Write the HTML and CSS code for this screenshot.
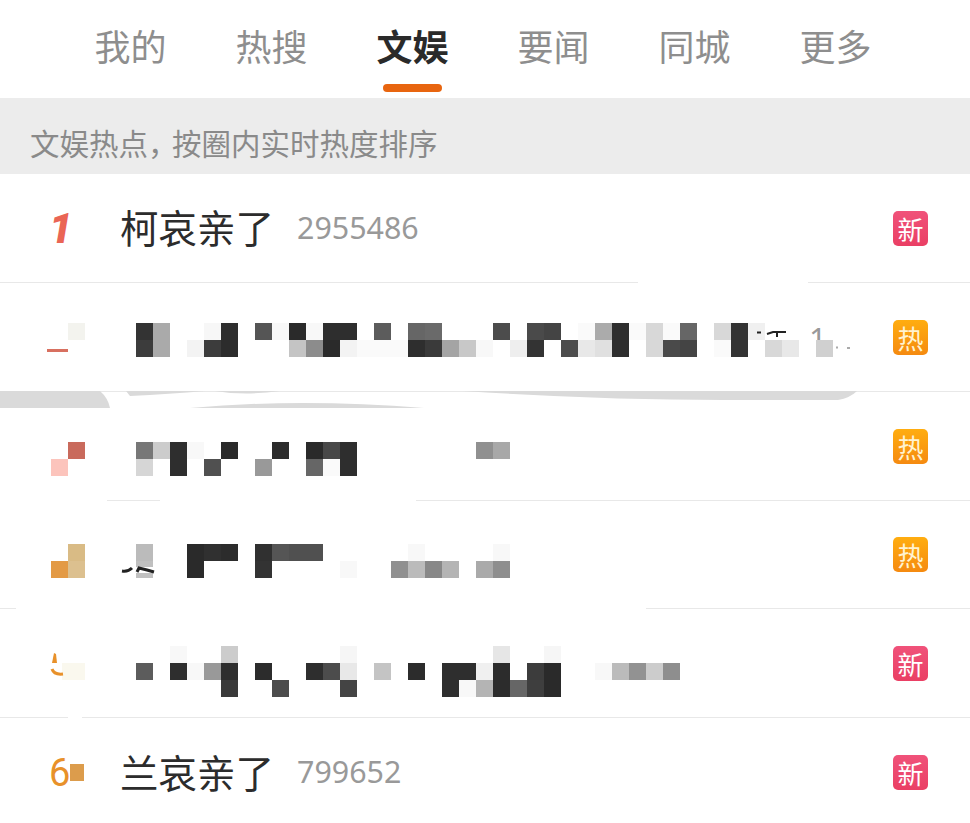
FILE: index.html
```html
<!DOCTYPE html>
<html lang="zh-CN">

<head>
  <meta charset="UTF-8">
  <meta name="viewport" content="width=device-width, initial-scale=1.0">
  <title>文娱热点</title>
  <link rel="stylesheet" href="styles.css">
</head>

<body>
  <div class="page">
    <div class="tabs">
      <div class="tab">我的</div>
      <div class="tab">热搜</div>
      <div class="tab active">文娱</div>
      <div class="tab">要闻</div>
      <div class="tab">同城</div>
      <div class="tab">更多</div>
    </div>

    <div class="notice">文娱热点<span class="comma">，</span>按圈内实时热度排序</div>

    <div class="row">
      <div class="rank rank-first">1</div>
      <div class="title">柯哀亲了</div>
      <div class="count">2955486</div>
      <div class="badge new">新</div>
    </div>

    <!-- row 2, title is pixelated in the screenshot -->
    <div class="row">
      <svg class="hidden" viewBox="0 0 880 108">
        <text class="stray" x="809" y="67">1</text>
        <g class="cells" transform="translate(51 40) scale(17)">
          <rect x="1" y="0" fill="#f3f3ee" />
        </g>
        <rect x="47" y="66" width="21" height="3" fill="#d87060" />
        <g class="cells" transform="translate(136 40) scale(17)">
          <rect x="0" y="0" fill="#333" /><rect x="1" y="0" fill="#aaa" /><rect x="4" y="0" fill="#f7f7f7" />
          <rect x="5" y="0" fill="#2e2e2e" /><rect x="7" y="0" fill="#555" /><rect x="8" y="0" fill="#f8f8f8" />
          <rect x="9" y="0" fill="#2a2a2a" /><rect x="10" y="0" fill="#f8f8f8" /><rect x="11" y="0" fill="#2e2e2e" />
          <rect x="12" y="0" fill="#2e2e2e" /><rect x="14" y="0" fill="#5c5c5c" /><rect x="16" y="0" fill="#666" />
          <rect x="17" y="0" fill="#6a6a6a" /><rect x="21" y="0" fill="#4c4c4c" /><rect x="23" y="0" fill="#4a4a4a" />
          <rect x="24" y="0" fill="#444" /><rect x="26" y="0" fill="#fafafa" /><rect x="27" y="0" fill="#ababab" />
          <rect x="28" y="0" fill="#2e2e2e" /><rect x="29" y="0" fill="#fafafa" /><rect x="30" y="0" fill="#d8d8d8" />
          <rect x="31" y="0" fill="#fafafa" /><rect x="32" y="0" fill="#666" /><rect x="34" y="0" fill="#d8d8d8" />
          <rect x="35" y="0" fill="#333" /><rect x="36" y="0" fill="#f0f0f0" />
          <rect x="0" y="1" fill="#3c3c3c" /><rect x="1" y="1" fill="#aaa" /><rect x="3" y="1" fill="#f3f3f3" />
          <rect x="4" y="1" fill="#3c3c3c" /><rect x="5" y="1" fill="#2c2c2c" /><rect x="9" y="1" fill="#c4c4c4" />
          <rect x="10" y="1" fill="#8c8c8c" /><rect x="11" y="1" fill="#2a2a2a" /><rect x="12" y="1" fill="#f3f3f3" />
          <rect x="13" y="1" fill="#fafafa" /><rect x="14" y="1" fill="#fafafa" /><rect x="15" y="1" fill="#fafafa" />
          <rect x="16" y="1" fill="#2e2e2e" /><rect x="17" y="1" fill="#3a3a3a" /><rect x="18" y="1" fill="#a4a4a4" />
          <rect x="19" y="1" fill="#c8c8c8" /><rect x="20" y="1" fill="#f8f8f8" /><rect x="22" y="1" fill="#eee" />
          <rect x="23" y="1" fill="#333" /><rect x="25" y="1" fill="#4c4c4c" /><rect x="26" y="1" fill="#e8e8e8" />
          <rect x="27" y="1" fill="#e0e0e0" /><rect x="28" y="1" fill="#2e2e2e" /><rect x="30" y="1" fill="#d8d8d8" />
          <rect x="31" y="1" fill="#4a4a4a" /><rect x="32" y="1" fill="#444" /><rect x="34" y="1" fill="#fafafa" />
          <rect x="35" y="1" fill="#333" /><rect x="37" y="1" fill="#d8d8d8" /><rect x="38" y="1" fill="#e8e8e8" />
          <rect x="40" y="1" fill="#d0d0d0" />
        </g>
        <path class="scrap" d="M757 49.5h4M767 51l6-2h13M777 50v4" />
        <path class="dots" d="M836 64.5h2M847 65h3" />
      </svg>
      <div class="badge hot">热</div>
    </div>

    <div class="row">
      <svg class="hidden" viewBox="0 0 880 108">
        <g class="cells" transform="translate(51 50) scale(17)">
          <rect x="1" y="0" fill="#c96a5c" /><rect x="0" y="1" fill="#fcc4bc" />
        </g>
        <g class="cells" transform="translate(136 50) scale(17)">
          <rect x="0" y="0" fill="#777" /><rect x="1" y="0" fill="#ccc" /><rect x="2" y="0" fill="#2e2e2e" />
          <rect x="3" y="0" fill="#f8f8f8" /><rect x="5" y="0" fill="#2a2a2a" /><rect x="8" y="0" fill="#2c2c2c" />
          <rect x="10" y="0" fill="#2a2a2a" /><rect x="11" y="0" fill="#484848" /><rect x="12" y="0" fill="#2e2e2e" />
          <rect x="20" y="0" fill="#909090" /><rect x="21" y="0" fill="#a8a8a8" />
          <rect x="0" y="1" fill="#d6d6d6" /><rect x="2" y="1" fill="#2e2e2e" /><rect x="4" y="1" fill="#505050" />
          <rect x="7" y="1" fill="#999" /><rect x="10" y="1" fill="#666" /><rect x="11" y="1" fill="#fafafa" />
          <rect x="12" y="1" fill="#2e2e2e" />
        </g>
      </svg>
      <div class="badge hot">热</div>
    </div>

    <div class="row row-short">
      <svg class="hidden" viewBox="0 0 880 108">
        <g class="cells" transform="translate(51 43) scale(17)">
          <rect x="1" y="0" fill="#d9bb85" /><rect x="0" y="1" fill="#e39a45" /><rect x="1" y="1" fill="#dcc08f" />
        </g>
        <g class="cells" transform="translate(136 43) scale(17)">
          <rect x="0" y="0" fill="#bbb" /><rect x="3" y="0" fill="#2a2a2a" /><rect x="4" y="0" fill="#303030" />
          <rect x="5" y="0" fill="#2c2c2c" /><rect x="7" y="0" fill="#303030" /><rect x="8" y="0" fill="#555" />
          <rect x="9" y="0" fill="#505050" /><rect x="10" y="0" fill="#505050" /><rect x="16" y="0" fill="#f8f8f8" />
          <rect x="21" y="0" fill="#f8f8f8" />
          <rect x="0" y="1" fill="#c0c0c0" /><rect x="3" y="1" fill="#2a2a2a" /><rect x="7" y="1" fill="#333" />
          <rect x="12" y="1" fill="#f8f8f8" /><rect x="15" y="1" fill="#909090" /><rect x="16" y="1" fill="#bbb" />
          <rect x="17" y="1" fill="#888" /><rect x="18" y="1" fill="#b4b4b4" /><rect x="20" y="1" fill="#aaa" />
          <rect x="21" y="1" fill="#8e8e8e" />
        </g>
        <rect x="136" y="66" width="17" height="6" fill="#fff" />
        <path class="scrap-thick" d="M122 70q6 1 10-3M137 71l2-4 8 2 7 2" />
      </svg>
      <div class="badge hot">热</div>
    </div>

    <div class="row">
      <svg class="hidden" viewBox="0 0 880 108">
        <rect x="62" y="54" width="23" height="17" fill="#faf8ee" />
        <path class="five" d="M54 44l2 1 1 9h-5z" />
        <path class="five-curve" d="M52 60q2 6 11 5" />
        <g class="cells" transform="translate(136 37) scale(17)">
          <rect x="2" y="0" fill="#f8f8f8" /><rect x="5" y="0" fill="#ccc" /><rect x="12" y="0" fill="#f6f6f6" />
          <rect x="21" y="0" fill="#e6e6e6" /><rect x="24" y="0" fill="#f6f6f6" />
          <rect x="0" y="1" fill="#5c5c5c" /><rect x="2" y="1" fill="#2e2e2e" /><rect x="3" y="1" fill="#f8f8f8" />
          <rect x="4" y="1" fill="#999" /><rect x="5" y="1" fill="#2e2e2e" /><rect x="7" y="1" fill="#2c2c2c" />
          <rect x="10" y="1" fill="#2e2e2e" /><rect x="11" y="1" fill="#4c4c4c" /><rect x="12" y="1" fill="#e8e8e8" />
          <rect x="14" y="1" fill="#c4c4c4" /><rect x="16" y="1" fill="#2c2c2c" /><rect x="18" y="1" fill="#2e2e2e" />
          <rect x="19" y="1" fill="#2e2e2e" /><rect x="20" y="1" fill="#f0f0f0" /><rect x="21" y="1" fill="#2c2c2c" />
          <rect x="23" y="1" fill="#3c3c3c" /><rect x="24" y="1" fill="#2a2a2a" /><rect x="27" y="1" fill="#f8f8f8" />
          <rect x="28" y="1" fill="#bbb" /><rect x="29" y="1" fill="#929292" /><rect x="30" y="1" fill="#ccc" />
          <rect x="31" y="1" fill="#8e8e8e" />
          <rect x="5" y="2" fill="#3a3a3a" /><rect x="8" y="2" fill="#4c4c4c" /><rect x="12" y="2" fill="#444" />
          <rect x="18" y="2" fill="#2e2e2e" /><rect x="19" y="2" fill="#f8f8f8" /><rect x="20" y="2" fill="#b4b4b4" />
          <rect x="21" y="2" fill="#2c2c2c" /><rect x="22" y="2" fill="#666" /><rect x="23" y="2" fill="#3e3e3e" />
          <rect x="24" y="2" fill="#2a2a2a" />
        </g>
      </svg>
      <div class="badge new">新</div>
    </div>

    <div class="row row-last">
      <div class="rank rank-six">6<span class="rank-cell"></span></div>
      <div class="title">兰哀亲了</div>
      <div class="count">799652</div>
      <div class="badge new">新</div>
    </div>

    <!-- leftovers of the scribbled-out parts, they lie over the rows -->
    <svg class="smudges" viewBox="0 0 970 823">
      <rect x="638" y="281" width="170" height="3" fill="#fff" />
      <rect x="0" y="499" width="107" height="3" fill="#fff" />
      <rect x="160" y="499" width="256" height="3" fill="#fff" />
      <rect x="16" y="607" width="630" height="3" fill="#fff" />
      <rect x="68" y="716" width="14" height="3" fill="#fff" />
      <path d="M0 391H100Q108 398 110 408H0Z" />
      <path d="M126 391L130 396Q170 394 205 391Z" />
      <path d="M215 391Q245 396 280 391Z" />
      <path d="M190 408Q300 398 424 408Z" />
      <path d="M463 391Q600 400 723 400H838Q850 398 857 391Z" />
    </svg>
  </div>
</body>

</html>
```

FILE: styles.css
```css
* {
  margin: 0;
  padding: 0;
  box-sizing: border-box;
}

body {
  background: #fff;
  font-family: "Noto Sans CJK SC", "Noto Sans", sans-serif;
}

.page {
  position: relative;
  width: 970px;
  height: 823px;
  overflow: hidden;
}

.tabs {
  display: grid;
  grid-template-columns: repeat(6, 141px);
  height: 98px;
  padding: 25px 0 0 60px;
}

.tab {
  display: flex;
  flex-direction: column;
  align-items: center;
  font-size: 36px;
  line-height: 41px;
  color: #8e8e8e;
}

.tab::after {
  content: "";
  width: 59px;
  height: 8px;
  margin-top: 18px;
  border-radius: 4px;
}

.tab.active {
  font-weight: 700;
  color: #2a2a2a;
}

.tab.active::after {
  background: #e8650f;
}

.notice {
  height: 76px;
  padding: 14px 0 0 30px;
  background: #ececec;
  font-size: 29.5px;
  line-height: 60px;
  color: #8a8a8a;
}

.comma {
  letter-spacing: -5.5px;
}

.row {
  display: flex;
  align-items: center;
  height: 109px;
  padding-right: 42px;
  border-bottom: 1px solid #e8e8e8;
}

.row-short {
  height: 108px;
}

.row-last {
  border-bottom: none;
}

.rank {
  display: flex;
  align-items: center;
  width: 120px;
  padding-left: 49px;
  font-family: "Roboto", sans-serif;
}

.rank-first {
  font-size: 42px;
  font-weight: 900;
  font-style: italic;
  color: #ea6555;
}

.rank-six {
  font-size: 38px;
  color: #e8912a;
}

.rank-cell {
  width: 14px;
  height: 17px;
  background: #dc9c4c;
}

.title {
  margin-bottom: 4px;
  font-size: 38.5px;
  line-height: 50px;
  color: #2c2c2c;
}

.count {
  margin-left: 23px;
  margin-bottom: 2px;
  font-family: "Noto Sans", sans-serif;
  font-size: 30.4px;
  color: #999;
}

.badge {
  display: flex;
  align-items: center;
  justify-content: center;
  width: 35px;
  height: 35px;
  margin-left: auto;
  border-radius: 5px;
  font-size: 26px;
  line-height: 35px;
  color: #fff;
}

.badge.new {
  background: linear-gradient(#f0527a, #ea3f64);
}

.badge.hot {
  background: linear-gradient(#ffad10, #f58a10);
  color: #fff3d0;
}

.hidden {
  flex: none;
  width: 880px;
  height: 108px;
}

.cells {
  shape-rendering: crispEdges;
}

.cells rect {
  width: 1px;
  height: 1px;
}

.stray {
  font-family: "Noto Sans", sans-serif;
  font-size: 31px;
  fill: #999;
}

.scrap {
  fill: none;
  stroke: #222;
  stroke-width: 2;
}

.scrap-thick {
  fill: none;
  stroke: #222;
  stroke-width: 3;
}

.dots {
  fill: none;
  stroke: #aaa;
  stroke-width: 2;
}

.five {
  fill: #e8912a;
}

.five-curve {
  fill: none;
  stroke: #e8912a;
  stroke-width: 3;
}

.smudges {
  position: absolute;
  top: 0;
  left: 0;
  width: 970px;
  height: 823px;
  fill: #dadada;
}
```
